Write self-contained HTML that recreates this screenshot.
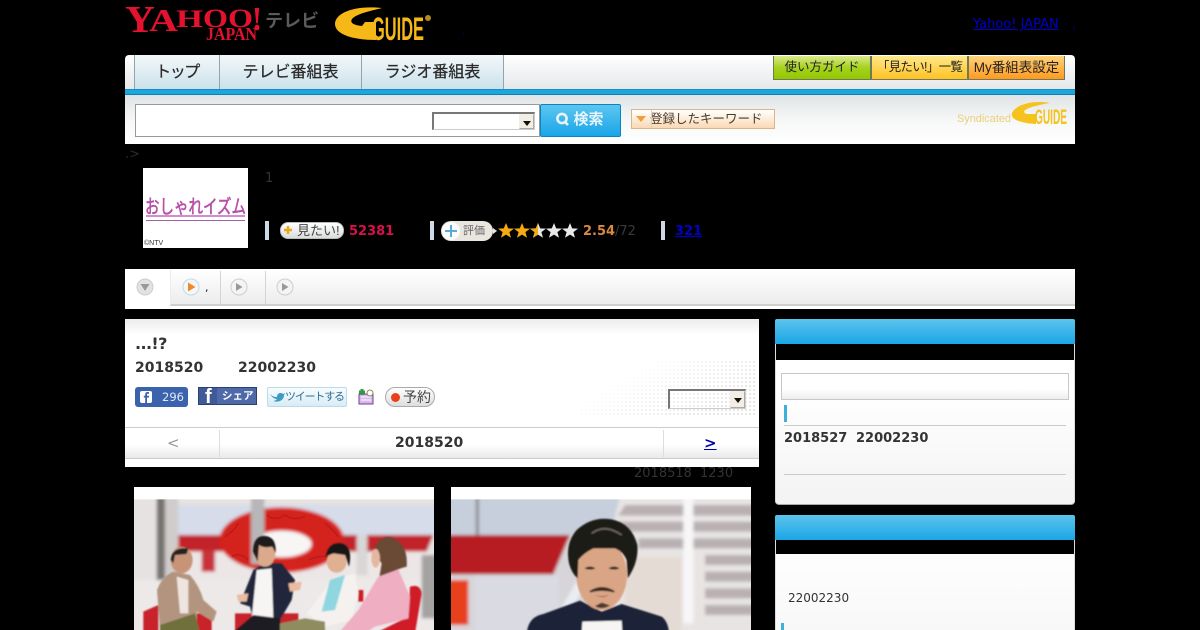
<!DOCTYPE html>
<html lang="ja"><head><meta charset="utf-8"><title>おしゃれイズム</title>
<style>
html,body{margin:0;padding:0;background:#000;width:1200px;height:630px;overflow:hidden}
body{position:relative;font-family:"DejaVu Sans",sans-serif;color:#333}
.a{position:absolute;white-space:nowrap}
.j{font-family:"Liberation Sans","Noto Sans CJK JP",sans-serif}
.b{font-weight:bold}
.tab{position:absolute;top:55px;height:34px;background:linear-gradient(#f4f8fa,#cbe1eb);border-right:1px solid #8fa5b0;color:#2a2a2a;font:16px/36px "Liberation Sans","Noto Sans CJK JP",sans-serif;text-align:center;white-space:nowrap;-webkit-text-stroke:.25px #2a2a2a}
.btn{position:absolute;top:56px;height:24px;font:12.5px/23px "Liberation Sans","Noto Sans CJK JP",sans-serif;color:#222;text-align:center;border:1px solid #6d7a55;border-width:0 1px 1px 1px;box-sizing:border-box;white-space:nowrap;overflow:hidden}
.sel{position:absolute;box-sizing:border-box;background:#fff;border:1px solid #ccc;border-top:2px solid #777;border-left:2px solid #777}
.sel i{position:absolute;right:0;top:0;bottom:0;width:15px;background:#f2efe2;border:1px solid #aaa;border-left-color:#eee;border-top-color:#eee;box-sizing:border-box}
.sel i:after{content:"";position:absolute;left:3px;top:6px;border:4px solid transparent;border-top:5px solid #111}
.bar{position:absolute;width:4px;top:221px;height:19px;background:#ced9e5}
</style></head><body>

<!-- logo header -->
<svg class="a" style="left:0;top:0" width="1200" height="50">
<g font-family="Liberation Serif" font-weight="bold" fill="#e4112f">
<text x="125" y="32" font-size="38" textLength="30" lengthAdjust="spacingAndGlyphs">Y</text>
<text x="149" y="31" font-size="32" textLength="29" lengthAdjust="spacingAndGlyphs">A</text>
<text x="176" y="27" font-size="25" textLength="27" lengthAdjust="spacingAndGlyphs">H</text>
<text x="203" y="27" font-size="26" textLength="25" lengthAdjust="spacingAndGlyphs">O</text>
<text x="228" y="27" font-size="26" textLength="25" lengthAdjust="spacingAndGlyphs">O</text>
<text x="252" y="30" font-size="34" textLength="10" lengthAdjust="spacingAndGlyphs">!</text>
<text x="206" y="40" font-size="18" textLength="51" lengthAdjust="spacingAndGlyphs">JAPAN</text>
</g>
<text x="265" y="27" font-family="Noto Sans CJK JP" font-weight="bold" font-size="18" fill="#5b5b5b" textLength="54" lengthAdjust="spacingAndGlyphs">テレビ</text>
<path d="M382 8C352 5 335 14 335 24C335 34 352 40 376 40L376 22L365 22L362 26C352 25 350 22 352 19C356 14 370 11 382 8Z" fill="#f6b816"/>
<text x="372" y="40" font-family="Liberation Sans" font-weight="bold" font-size="32" fill="#f6b816" textLength="52" lengthAdjust="spacingAndGlyphs">GUIDE</text>
<circle cx="428" cy="18" r="3" fill="#b88c1c"/>
</svg>
<a class="a" style="left:973px;top:17px;font-size:13px;color:#0000c8;text-decoration:underline">Yahoo! JAPAN</a>
<div class="a" style="left:1072px;top:17px;font-size:12px;color:#00008a">,</div>
<div class="a" style="left:462px;top:23px;font-size:12px;color:#00005a">,</div>

<!-- nav -->
<div class="a" style="left:125px;top:55px;width:950px;height:34px;background:linear-gradient(#fff,#e5e8ea);border-radius:4px 4px 0 0"></div>
<div class="a" style="left:134px;top:55px;width:1px;height:34px;background:#8fa5b0"></div>
<div class="tab" style="left:135px;width:84px;letter-spacing:-1.5px">トップ</div>
<div class="tab" style="left:220px;width:141px">テレビ番組表</div>
<div class="tab" style="left:362px;width:141px">ラジオ番組表</div>
<div class="btn" style="left:773px;width:98px;background:linear-gradient(#dbe98e 0,#a6d21f 50%,#92c800);">使い方ガイド</div>
<div class="btn" style="left:871px;width:97px;background:linear-gradient(#ffe88a,#ffc223);letter-spacing:-.7px">「見たい!」一覧</div>
<div class="btn" style="left:968px;width:97px;background:linear-gradient(#ffd27a,#ff9a1f);font-size:13.5px">My番組表設定</div>
<div class="a" style="left:125px;top:89px;width:950px;height:6px;background:#1ca8dd;border-top:1px solid #1590c4;border-bottom:1px solid #0f7fb0;box-sizing:border-box"></div>

<!-- search -->
<div class="a" style="left:125px;top:95px;width:950px;height:49px;background:linear-gradient(#e0e4e6,#f7f8f8 55%,#fff)"></div>
<div class="a" style="left:135px;top:104px;width:405px;height:33px;background:#fff;border:1px solid #999;box-sizing:border-box"></div>
<div class="sel" style="left:432px;top:112px;width:103px;height:18px"><i></i></div>
<div class="a j b" style="left:540px;top:104px;width:81px;height:33px;box-sizing:border-box;background:linear-gradient(#5cc6f0,#1aa5e8);border:1px solid #0f82c0;border-radius:2px;color:#e8f4fb;font-size:15px;line-height:30px;text-align:center;padding-left:16px">検索</div>
<svg class="a" style="left:554px;top:111px" width="18" height="18"><circle cx="8" cy="7.500" r="4.600" fill="none" stroke="#e8f4fb" stroke-width="2.600"/><path d="M10.500 10.500L14 14" stroke="#e8f4fb" stroke-width="2.600"/></svg>
<div class="a j" style="left:631px;top:109px;width:144px;height:20px;box-sizing:border-box;border:1px solid #d8b78c;background:linear-gradient(#fff,#fad9b4);font-size:12.5px;line-height:18px;color:#4a3a28;padding-left:18px">登録したキーワード</div>
<div class="a" style="left:651px;top:110px;width:1px;height:18px;background:#e3d0b8"></div>
<svg class="a" style="left:631px;top:109px" width="20" height="20"><path d="M5 7H15L10 13Z" fill="#f59b3a"/></svg>
<svg class="a" style="left:950px;top:98px" width="125" height="30">
<text x="7" y="24" font-family="Liberation Sans" font-size="11" fill="#eccf78" textLength="54" lengthAdjust="spacingAndGlyphs">Syndicated</text>
<path d="M100 5C84 2 66 6 62 15C60 22 72 25 86 26L86 16L77 16C70 14 75 9 100 5Z" fill="#f6c21c"/>
<text x="85" y="26" font-family="Liberation Sans" font-weight="bold" font-size="21" fill="#f6c21c" textLength="32" lengthAdjust="spacingAndGlyphs">GUIDE</text>
</svg>

<div class="a" style="left:125px;top:147px;font-size:13px;color:#2a2a35">.&gt;</div>

<!-- program logo -->
<div class="a" style="left:143px;top:168px;width:105px;height:80px;background:#fff"></div>
<svg class="a" style="left:143px;top:168px" width="105" height="80">
<text x="2" y="45" font-family="Noto Sans CJK JP" font-size="19" fill="#b84fa8" stroke="#b84fa8" stroke-width=".6" textLength="101" lengthAdjust="spacingAndGlyphs">おしゃれイズム</text>
<rect x="3" y="47" width="99" height="2" fill="#cf8fcc"/><rect x="3" y="52" width="99" height="1" fill="#a060a0"/>
<text x="1" y="77" font-family="Liberation Sans" font-size="7" fill="#333">©NTV</text>
</svg>
<div class="a" style="left:265px;top:171px;font-size:13px;color:#333">1</div>

<div class="bar" style="left:265px"></div><div class="bar" style="left:430px"></div><div class="bar" style="left:661px"></div>
<div class="a j" style="left:280px;top:222px;width:64px;height:17px;box-sizing:border-box;border-radius:8px;background:linear-gradient(#fff,#dadcdc);border:1px solid #bbb;font-size:13px;line-height:15px;color:#444;padding-left:16px">見たい!</div>
<svg class="a" style="left:282px;top:224px" width="12" height="12"><path d="M6 2V10M2 6H10" stroke="#e8a91c" stroke-width="2.400"/></svg>
<div class="a b" style="left:349px;top:224px;font-size:13px;color:#d8104e">52381</div>
<div class="a j" style="left:441px;top:221px;width:52px;height:20px;border-radius:10px;background:#e9e5df;font-size:11px;line-height:20px;color:#666;text-indent:22px">評価</div>
<svg class="a" style="left:441px;top:221px" width="60" height="20"><circle cx="10" cy="10" r="9" fill="#fbfbfb"/><path d="M10 4V16M4 10H16" stroke="#5aa9d8" stroke-width="2"/><path d="M52 7L56 10L52 13Z" fill="#e9e5df"/></svg>
<svg class="a" style="left:497px;top:221px" width="84" height="20">
<defs><path id="s" d="M0-8L2.200-2.600L8-2.400L3.400 1.100L5 6.800L0 3.600L-5 6.800L-3.400 1.100L-8-2.400L-2.200-2.600Z"/><clipPath id="hc"><rect x="33" y="0" width="8" height="20"/></clipPath></defs>
<use href="#s" x="9" y="10" fill="#f6aa12"/><use href="#s" x="25" y="10" fill="#f6aa12"/>
<use href="#s" x="41" y="10" fill="#e8e8e8"/><g clip-path="url(#hc)"><use href="#s" x="41" y="10" fill="#f6aa12"/></g>
<use href="#s" x="57" y="10" fill="#e8e8e8"/><use href="#s" x="73" y="10" fill="#e8e8e8"/>
</svg>
<div class="a b" style="left:583px;top:224px;font-size:13px;color:#d98a3d">2.54</div>
<div class="a" style="left:615px;top:224px;font-size:13px;color:#3a3a3a">/72</div>
<a class="a b" style="left:675px;top:224px;font-size:13px;color:#0000c8;text-decoration:underline">321</a>

<!-- tabs bar -->
<div class="a" style="left:125px;top:269px;width:950px;height:40px;background:#fff"></div>
<div class="a" style="left:170px;top:270px;width:905px;height:34px;background:linear-gradient(#fff,#ececec);border-bottom:2px solid #cfcfcf"></div>
<div class="a" style="left:170px;top:270px;width:1px;height:35px;background:#ececec"></div>
<div class="a" style="left:220px;top:271px;width:1px;height:33px;background:#d4d4d4"></div>
<div class="a" style="left:265px;top:271px;width:1px;height:33px;background:#d4d4d4"></div>
<svg class="a" style="left:125px;top:269px" width="180" height="36">
<circle cx="20" cy="18" r="8" fill="#e2e2e2" stroke="#cdcdcd"/><path d="M15.500 15H24.500L20 22Z" fill="#999"/>
<circle cx="66" cy="18" r="8" fill="#f6f6f6" stroke="#bcdcec"/><path d="M63 13.500L70.500 18L63 22.500Z" fill="#ef8a2c"/>
<circle cx="114" cy="18" r="8" fill="#f4f4f4" stroke="#cdcdcd"/><path d="M111 14L117.500 18L111 22Z" fill="#999"/>
<circle cx="160" cy="18" r="8" fill="#f4f4f4" stroke="#cdcdcd"/><path d="M157 14L163.500 18L157 22Z" fill="#999"/>
</svg>
<div class="a" style="left:205px;top:281px;font-size:11px;color:#224">,</div>

<!-- main panel -->
<div class="a" style="left:125px;top:319px;width:634px;height:148px;background:linear-gradient(#ececec,#fff 16px)"></div>
<div class="a" style="left:580px;top:360px;width:175px;height:56px;background-image:radial-gradient(#e0e0e0 0.8px,transparent 1px);background-size:4px 4px;-webkit-mask-image:linear-gradient(150deg,transparent 25%,#000 80%);mask-image:linear-gradient(150deg,transparent 25%,#000 80%)"></div>
<div class="a b" style="left:135px;top:334px;font-size:16px;color:#333;letter-spacing:-.6px">...!?</div>
<div class="a b" style="left:135px;top:360px;font-size:14px;color:#333">2018520</div>
<div class="a b" style="left:238px;top:360px;font-size:14px;color:#333">22002230</div>

<div class="a" style="left:135px;top:387px;width:53px;height:20px;border-radius:3px;background:#3b63ad;color:#e4eaf5;font-size:11.5px;line-height:20px;text-indent:27px">296</div>
<svg class="a" style="left:135px;top:387px" width="24" height="20"><rect x="5" y="4" width="12" height="12" rx="2" fill="#fff"/><path d="M12 16V10.500H14V8.700H12V7.600C12 7 12.300 6.800 13 6.800H14V5H12.600C11 5 10.200 6 10.200 7.400V8.700H8.800V10.500H10.200V16Z" fill="#3b63ad"/></svg>
<div class="a j b" style="left:198px;top:387px;width:59px;height:18px;box-sizing:border-box;background:#4f6aa8;border:1px solid #2b3f70;color:#fff;font-size:10.5px;line-height:17px;text-indent:23px">シェア</div>
<div class="a" style="left:199px;top:388px;width:18px;height:16px;background:#3f5a96"></div>
<div class="a b" style="left:205px;top:387px;font:bold 20px/20px 'Liberation Sans';color:#fff">f</div>
<div class="a j" style="left:267px;top:387px;width:80px;height:20px;box-sizing:border-box;border:1px solid #bcdbe8;border-radius:2px;background:linear-gradient(#f8fcfe,#d8ecf5);color:#2e6f94;font-size:11px;letter-spacing:-1.2px;line-height:18px;text-indent:17px">ツイートする</div>
<svg class="a" style="left:269px;top:389px" width="16" height="16"><path d="M1 5C4 8 6 8 8 8C8 4 12 3 14 5L16 4L15 6C15 11 10 14 4 12C6 12 7 11 8 10C5 10 3 8 1 5Z" fill="#3b9cc4"/></svg>
<svg class="a" style="left:357px;top:388px" width="18" height="18"><rect x="2" y="6" width="14" height="10" fill="#d9b8ee" stroke="#6f3f98"/><path d="M5 1V7M2 4H8" stroke="#2f9c3f" stroke-width="3"/><circle cx="13" cy="5" r="3" fill="#fff" stroke="#8a8a50"/><path d="M4 9H14M4 12H14" stroke="#fff"/></svg>
<div class="a j" style="left:385px;top:387px;width:50px;height:20px;box-sizing:border-box;border:1px solid #aaa;border-radius:10px;background:linear-gradient(#fff,#ddd);font-size:14px;line-height:18px;color:#444;text-indent:17px">予約</div>
<div class="a" style="left:391px;top:393px;width:9px;height:9px;border-radius:5px;background:#e8401c"></div>
<div class="sel" style="left:668px;top:389px;width:78px;height:20px;background:transparent"><i></i></div>

<div class="a" style="left:125px;top:427px;width:634px;height:32px;box-sizing:border-box;border-top:1px solid #ccc;border-bottom:1px solid #ccc;background:linear-gradient(#fff 55%,#e9e9e9)"></div>
<div class="a" style="left:219px;top:430px;width:1px;height:27px;background:#ddd"></div>
<div class="a" style="left:663px;top:430px;width:1px;height:27px;background:#ddd"></div>
<div class="a" style="left:167px;top:434px;font-size:15px;color:#999">&lt;</div>
<div class="a b" style="left:395px;top:435px;font-size:14px;color:#333">2018520</div>
<a class="a b" style="left:704px;top:434px;font-size:15px;color:#0000a8;text-decoration:underline">&gt;</a>
<div class="a" style="left:634px;top:466px;font-size:13px;color:#333">2018518</div>
<div class="a" style="left:700px;top:466px;font-size:13px;color:#333">1230</div>

<!-- photos -->
<div class="a" style="left:134px;top:487px;width:300px;height:143px;background:#fff"></div>
<div class="a" style="left:451px;top:487px;width:300px;height:143px;background:#fff"></div>
<svg class="a" style="left:0;top:0" width="1200" height="630">
<defs><filter id="bl" x="-5%" y="-5%" width="110%" height="110%"><feGaussianBlur stdDeviation="5"/></filter>
<filter id="bs" x="-5%" y="-5%" width="110%" height="110%"><feGaussianBlur stdDeviation="2.500"/></filter>
<clipPath id="c1"><rect x="27" y="58" width="900" height="392"/></clipPath>
<clipPath id="c2"><rect x="18" y="58" width="900" height="392"/></clipPath></defs>
<g transform="translate(125 480) scale(.33333)"><g clip-path="url(#c1)"><g filter="url(#bl)">
<rect x="0" y="30" width="960" height="430" fill="#e6e2e1"/>
<rect x="95" y="30" width="25" height="270" fill="#77736f"/><rect x="120" y="30" width="40" height="270" fill="#cfcccb"/>
<rect x="160" y="75" width="800" height="95" fill="#d6dcea"/>
<path d="M160 165H925L905 215H160Z" fill="#c2202a"/>
<rect x="160" y="215" width="767" height="85" fill="#ece6e6"/>
<ellipse cx="470" cy="180" rx="187" ry="98" fill="#d4211f"/>
<ellipse cx="470" cy="192" rx="90" ry="40" fill="#f8f5f5"/>
<rect x="378" y="30" width="40" height="222" fill="#b7b6b8"/>
<rect x="695" y="165" width="32" height="120" fill="#d8d6d6"/>
<rect x="230" y="210" width="40" height="65" fill="#c8303a"/>
<rect x="27" y="300" width="900" height="160" fill="#ecE9e8"/>
<rect x="890" y="225" width="70" height="190" fill="#a5a2a2"/>
</g>
<g fill="none" stroke="#a81616" stroke-width="4" opacity=".6"><path d="M425 105Q450 125 480 105Q510 125 540 108M300 170Q330 150 340 130M600 130Q625 150 640 170M320 230Q345 215 370 240M550 240Q580 225 620 230"/></g>
<g filter="url(#bs)">
<path d="M55 395L100 375L100 460H55Z" fill="#c8202a"/><path d="M215 400H260V460H215Z" fill="#c8202a"/>
<path d="M330 400H520V460H330Z" fill="#c8202a"/>
<path d="M700 330H715V365H700ZM750 460L850 410L855 320Q885 310 890 340L870 460Z" fill="#d01f28"/>
<path d="M96 330Q110 290 145 275L195 285Q225 320 235 360L275 395L265 425L215 395L215 450H105Z" fill="#b3957f"/>
<path d="M155 290L190 300L190 400L165 400Z" fill="#eee4e0"/>
<path d="M105 435L210 400L225 460H105Z" fill="#6f6f3e"/>
<ellipse cx="170" cy="240" rx="33" ry="40" fill="#c89478"/>
<path d="M137 240Q140 200 190 205L185 222L150 225L145 250Z" fill="#222"/>
<path d="M345 370L385 270L420 250L470 250L510 300L500 360L465 420H385L375 380Z" fill="#23263d"/>
<path d="M395 270L440 265L445 415H380Z" fill="#f7f5f4"/>
<path d="M320 460L385 405L465 415L470 460Z" fill="#1c1c22"/>
<ellipse cx="420" cy="222" rx="31" ry="38" fill="#dba98c"/>
<path d="M384 215Q385 165 420 168Q455 170 452 220L442 200Q415 205 402 195L398 245Z" fill="#1d1a1a"/>
<path d="M490 310L530 305L525 330L495 335Z" fill="#e9bba0"/><path d="M335 345L370 340L365 365L340 365Z" fill="#e9bba0"/>
<path d="M545 400L620 300L690 280L700 340L680 420L600 440Z" fill="#f4f1ee"/>
<path d="M590 395L615 300L660 285L630 390Z" fill="#8fd6e0"/>
<path d="M465 430L540 415L600 425V460H465Z" fill="#8f8c60"/>
<ellipse cx="635" cy="245" rx="30" ry="33" fill="#e0b093"/>
<path d="M602 230Q610 185 650 190Q685 200 672 260L660 225L625 220Z" fill="#121212"/>
<path d="M745 215Q760 165 800 172Q850 190 845 260Q800 270 760 310L770 250Z" fill="#6a4a36"/>
<ellipse cx="752" cy="235" rx="13" ry="28" fill="#e4b79e"/>
<path d="M640 460L700 390L760 290L820 268L855 350L850 415L750 440L720 460Z" fill="#efaec2"/>
</g></g></g>
<g transform="translate(445 480) scale(.33333)"><g clip-path="url(#c2)"><g filter="url(#bl)">
<rect x="0" y="30" width="950" height="430" fill="#d7d5d9"/>
<rect x="0" y="30" width="548" height="135" fill="#c6cfdb"/>
<rect x="92" y="30" width="10" height="135" fill="#8d8f95"/>
<path d="M0 165H375L325 283H0Z" fill="#b71d22"/>
<rect x="0" y="300" width="70" height="135" fill="#e8401c"/>
<rect x="90" y="285" width="250" height="175" fill="#dadbe2"/>
<path d="M530 30H950V460H420Z" fill="#e8e4e4"/>
<path d="M540 75H950V107H520ZM520 125H950V155H510ZM580 175H950V205H580ZM780 225H950V255H780ZM780 275H950V305H780ZM780 325H950V355H780ZM780 375H950V405H780Z" fill="#b9b0b2"/>
<path d="M340 400L420 260L440 280L380 390Z" fill="#e9edf2"/>
<rect x="540" y="230" width="170" height="230" fill="#e4dcd4"/>
<rect x="715" y="30" width="30" height="400" fill="#f7f7f8"/>
</g>
<g filter="url(#bs)">
<path d="M245 460Q250 410 295 402L405 362L470 395L530 372L650 410Q670 425 672 460Z" fill="#1e2238"/>
<path d="M412 425L530 422L532 460H410Z" fill="#f7f5f3"/>
<ellipse cx="470" cy="285" rx="76" ry="105" fill="#d9a585"/>
<path d="M372 250Q360 190 395 150Q440 108 500 118Q560 130 577 195Q582 245 548 295L545 240Q535 215 510 205Q470 205 445 205Q415 220 400 240L398 295Q380 280 372 250Z" fill="#1f1a18"/>
<path d="M440 160Q480 130 530 165" stroke="#6d655d" stroke-width="5" fill="none"/>
<path d="M418 265Q435 255 452 265Q435 272 418 265ZM490 265Q507 255 524 265Q507 272 490 265Z" fill="#2a2220"/>
<path d="M435 335Q470 312 508 335Q470 325 435 335Z" fill="#3c2a20" stroke="#3c2a20" stroke-width="5"/>
<path d="M450 345Q470 352 490 345Q475 358 450 345Z" fill="#a55a50"/>
<path d="M450 378Q470 392 495 376L470 368Z" fill="#4a3a30"/>
</g></g></g>
</svg>

<!-- sidebar 1 -->
<div class="a" style="left:775px;top:319px;width:300px;height:25px;background:linear-gradient(#5cc3ec,#1aa7e6);border-radius:2px 2px 0 0"></div>
<div class="a" style="left:775px;top:344px;width:300px;height:161px;box-sizing:border-box;border:1px solid #ddd;border-top:0;border-bottom:1px solid #aaa;border-radius:0 0 4px 4px;background:linear-gradient(#fff 30%,#f3f3f3)"></div>
<div class="a" style="left:776px;top:344px;width:298px;height:16px;background:#000"></div>
<div class="a" style="left:781px;top:373px;width:288px;height:27px;box-sizing:border-box;border:1px solid #c8c8c8;background:linear-gradient(#fff 60%,#eee)"></div>
<div class="a" style="left:784px;top:405px;width:3px;height:17px;background:#3fb0d8"></div>
<div class="a" style="left:784px;top:425px;width:282px;height:1px;background:#ccc"></div>
<div class="a b" style="left:784px;top:431px;font-size:13px;color:#333">2018527</div>
<div class="a b" style="left:856px;top:431px;font-size:13px;color:#333">22002230</div>
<div class="a" style="left:784px;top:474px;width:282px;height:1px;background:#ccc"></div>

<!-- sidebar 2 -->
<div class="a" style="left:775px;top:515px;width:300px;height:25px;background:linear-gradient(#5cc3ec,#1aa7e6);border-radius:2px 2px 0 0"></div>
<div class="a" style="left:775px;top:540px;width:300px;height:90px;box-sizing:border-box;border:1px solid #ddd;border-width:0 1px;background:linear-gradient(#fff,#f8f8f8)"></div>
<div class="a" style="left:776px;top:540px;width:298px;height:14px;background:#000"></div>
<div class="a" style="left:788px;top:591px;font-size:12px;color:#333">22002230</div>
<div class="a" style="left:781px;top:623px;width:3px;height:7px;background:#3fb0d8"></div>
</body></html>
